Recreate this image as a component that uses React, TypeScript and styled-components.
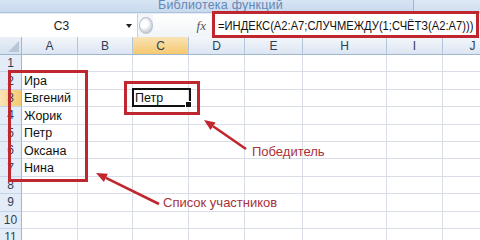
import React from "react";
import styled, { createGlobalStyle, css } from "styled-components";

const GlobalStyle = createGlobalStyle`
  html, body { margin: 0; padding: 0; background: #ffffff; }
  body { width: 480px; height: 240px; overflow: hidden; font-family: "Liberation Sans", Arial, sans-serif; }
`;

const RED = "#c0262d";

const Page = styled.div`
  position: relative;
  width: 480px;
  height: 240px;
  overflow: hidden;
  display: flex;
  flex-direction: column;
  background: #fff;
`;

const Ribbon = styled.div`
  height: 12px;
  flex: none;
  display: flex;
  background: linear-gradient(#d7e4f3, #c9daee);
  border-bottom: 1px solid #aac1de;
`;

const RibbonGroup = styled.div<{ $w: string }>`
  width: ${(p) => p.$w};
  flex: none;
  border-right: 1px solid #9fb7d6;
  display: flex;
  align-items: flex-end;
  padding-left: 158px;
  padding-bottom: 1px;
  box-sizing: border-box;
  font-size: 12.5px;
  line-height: 12px;
  letter-spacing: 0.2px;
  color: #6487b6;
  white-space: nowrap;
  overflow: hidden;
`;

const RibbonRest = styled.div`
  flex: 1;
  background: linear-gradient(#dde8f5, #d0def0);
`;

const FormulaBar = styled.div`
  height: 23px;
  flex: none;
  display: flex;
  align-items: stretch;
  background: #f2f5fa;
  border-top: 1px solid #e6edf6;
`;

const NameBox = styled.div`
  width: 138px;
  flex: none;
  position: relative;
  background: #fff;
  display: flex;
  align-items: center;
  justify-content: center;
  font-size: 12px;
  color: #222;
  border-right: 1px solid #c5d0de;
  padding-right: 14px;
  box-sizing: border-box;
`;

const DropArrow = styled.span`
  position: absolute;
  right: 5px;
  top: 10px;
  width: 0;
  height: 0;
  border-left: 3.5px solid transparent;
  border-right: 3.5px solid transparent;
  border-top: 4px solid #222;
`;

const Splitter = styled.div`
  width: 14px;
  height: 17px;
  margin: 3px 0 0 1px;
  border-radius: 50%;
  background: radial-gradient(circle at 35% 40%, #ffffff 0 30%, #d5dae1 60%, #a9b2bd 100%);
  border: 1px solid #b9c1cc;
  box-sizing: border-box;
  flex: none;
`;

const FxArea = styled.div`
  flex: none;
  width: 59px;
  display: flex;
  align-items: center;
  justify-content: flex-end;
  padding-right: 6px;
  box-sizing: border-box;
  font-family: "Liberation Serif", "Times New Roman", serif;
  font-style: italic;
  font-size: 13px;
  color: #555;
  background: linear-gradient(#ffffff, #f1f4f8);
`;

const FormulaText = styled.div`
  flex: 1;
  background: #fff;
  display: flex;
  align-items: center;
  padding-left: 6px;
  overflow: hidden;
`;

const FormulaValue = styled.span`
  display: inline-block;
  font-size: 13px;
  color: #111;
  white-space: nowrap;
  transform: scaleX(0.86);
  transform-origin: left center;
`;

const COLS = [22, 56, 55, 56, 56, 58, 84, 56, 60];
const ROW_H = 17.4;

const Sheet = styled.div`
  display: grid;
  grid-template-columns: ${COLS.map((c) => c + "px").join(" ")};
  grid-template-rows: 18px repeat(11, ${ROW_H}px);
`;

const headerBase = css`
  display: flex;
  align-items: center;
  justify-content: center;
  font-size: 12px;
  color: #2f3f55;
  box-sizing: border-box;
`;

const ColHead = styled.div<{ $sel?: boolean }>`
  ${headerBase}
  border-right: 1px solid #b4c6dc;
  border-bottom: 1px solid #9eb6ce;
  background: ${(p) =>
    p.$sel
      ? "linear-gradient(#fae3b6, #f5c96f)"
      : "linear-gradient(#f4f7fb, #dbe5f2)"};
  padding-top: 1px;
`;

const Corner = styled.div`
  ${headerBase}
  position: relative;
  border-right: 1px solid #9eb6ce;
  border-bottom: 1px solid #9eb6ce;
  background: linear-gradient(#e9eff7, #d6e2f0);
  &::after {
    content: "";
    position: absolute;
    right: 2px;
    bottom: 2px;
    width: 0;
    height: 0;
    border-left: 11px solid transparent;
    border-bottom: 11px solid #b8c7d8;
  }
`;

const RowHead = styled.div<{ $sel?: boolean }>`
  ${headerBase}
  border-right: 1px solid #9eb6ce;
  border-bottom: 1px solid #c5d4e6;
  background: ${(p) =>
    p.$sel ? "linear-gradient(90deg, #fae3b6, #f5c96f)" : "#e4ecf7"};
  font-size: 12px;
`;

const Cell = styled.div`
  border-right: 1px solid #d9dee6;
  border-bottom: 1px solid #d9dee6;
  box-sizing: border-box;
  font-size: 12.5px;
  color: #111;
  display: flex;
  align-items: center;
  padding-left: 2px;
  padding-top: 1px;
  white-space: nowrap;
  overflow: visible;
`;

const Box = styled.div<{ $x: number; $y: number; $w: number; $h: number; $c?: string; $t?: number }>`
  position: absolute;
  left: ${(p) => p.$x}px;
  top: ${(p) => p.$y}px;
  width: ${(p) => p.$w}px;
  height: ${(p) => p.$h}px;
  border: ${(p) => p.$t ?? 3}px solid ${(p) => p.$c ?? RED};
  box-sizing: border-box;
  pointer-events: none;
`;

const FillHandle = styled.span`
  position: absolute;
  right: -3px;
  bottom: -3px;
  width: 5px;
  height: 5px;
  background: #111;
  border: 1px solid #fff;
`;

const Label = styled.div<{ $x: number; $y: number }>`
  position: absolute;
  left: ${(p) => p.$x}px;
  top: ${(p) => p.$y}px;
  font-size: 13px;
  color: #a8313a;
  white-space: nowrap;
`;

const Overlay = styled.svg`
  position: absolute;
  left: 0;
  top: 0;
  pointer-events: none;
`;

const colNames = ["A", "B", "C", "D", "E", "H", "I", "J"];
const data: Record<string, string> = {
  A2: "Ира",
  A3: "Евгений",
  A4: "Жорик",
  A5: "Петр",
  A6: "Оксана",
  A7: "Нина",
  C3: "Петр",
};

function Arrow({ x1, y1, x2, y2 }: { x1: number; y1: number; x2: number; y2: number }) {
  const ang = Math.atan2(y2 - y1, x2 - x1);
  const len = 11;
  const half = 4.5;
  const bx = x2 - len * Math.cos(ang);
  const by = y2 - len * Math.sin(ang);
  const px = -Math.sin(ang) * half;
  const py = Math.cos(ang) * half;
  return (
    <g>
      <line x1={x1} y1={y1} x2={bx} y2={by} stroke={RED} strokeWidth={2.6} />
      <polygon points={`${x2},${y2} ${bx + px},${by + py} ${bx - px},${by - py}`} fill={RED} />
    </g>
  );
}

export default function App() {
  return (
    <>
      <GlobalStyle />
      <Page>
        <Ribbon>
          <RibbonGroup $w="414px">Библиотека функций</RibbonGroup>
          <RibbonRest />
        </Ribbon>
        <FormulaBar>
          <NameBox>
            C3
            <DropArrow />
          </NameBox>
          <Splitter />
          <FxArea>fx</FxArea>
          <FormulaText>
            <FormulaValue>=ИНДЕКС(А2:А7;СЛУЧМЕЖДУ(1;СЧЁТЗ(А2:А7)))</FormulaValue>
          </FormulaText>
        </FormulaBar>
        <Sheet>
          <Corner />
          {colNames.map((c) => (
            <ColHead key={c} $sel={c === "C"}>
              {c}
            </ColHead>
          ))}
          {Array.from({ length: 11 }, (_, i) => i + 1).map((r) => (
            <React.Fragment key={r}>
              <RowHead $sel={r === 3}>{r}</RowHead>
              {colNames.map((c) => (
                <Cell key={c}>{data[c + r] ?? ""}</Cell>
              ))}
            </React.Fragment>
          ))}
        </Sheet>

        <Box $x={212} $y={11} $w={267} $h={27} />
        <Box $x={8} $y={70} $w={80} $h={112} />
        <Box $x={124} $y={81} $w={76} $h={34} />
        <Box $x={132} $y={88} $w={59} $h={19} $c="#111" $t={2}>
          <FillHandle />
        </Box>

        <Overlay width={480} height={240}>
          <Arrow x1={246} y1={149} x2={204} y2={120} />
          <Arrow x1={159} y1={204} x2={96} y2={173} />
        </Overlay>
        <Label $x={252} $y={144}>Победитель</Label>
        <Label $x={163} $y={195}>Список участников</Label>
      </Page>
    </>
  );
}
